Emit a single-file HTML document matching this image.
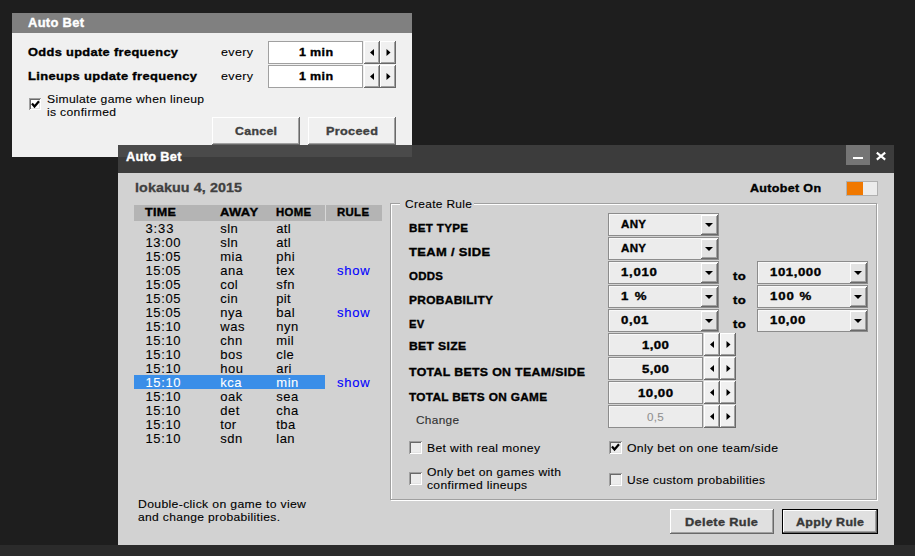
<!DOCTYPE html>
<html><head><meta charset="utf-8"><style>
html,body{margin:0;padding:0;width:915px;height:556px;overflow:hidden;background:#1e1e1e;}
body{position:relative;font-family:"Liberation Sans",sans-serif;}
body>div{position:absolute;}
.t{white-space:nowrap;}
svg{position:absolute}
</style></head><body>
<div style="left:12px;top:13px;width:400px;height:20px;background:#808080"></div>
<div style="left:12px;top:33px;width:400px;height:124px;background:#f0f0f0"></div>
<div class="t" style="left:28.00px;top:12.84px;font-size:12px;font-weight:bold;color:#fff;line-height:20px;letter-spacing:0.300px;-webkit-text-stroke:0.35px #fff;transform:scaleX(1.0740314537782891);transform-origin:0 0;">Auto Bet</div>
<div class="t" style="left:28.00px;top:42.19px;font-size:11px;font-weight:bold;color:#000;line-height:20px;letter-spacing:0.300px;-webkit-text-stroke:0.35px #000;transform:scaleX(1.1639636843330488);transform-origin:0 0;">Odds update frequency</div>
<div class="t" style="left:28.00px;top:66.19px;font-size:11px;font-weight:bold;color:#000;line-height:20px;letter-spacing:0.300px;-webkit-text-stroke:0.35px #000;transform:scaleX(1.1748348974626348);transform-origin:0 0;">Lineups update frequency</div>
<div class="t" style="left:220.70px;top:42.19px;font-size:11px;font-weight:normal;color:#000;line-height:20px;letter-spacing:0.300px;-webkit-text-stroke:0.1px #000;transform:scaleX(1.1367673179396094);transform-origin:0 0;">every</div>
<div class="t" style="left:220.70px;top:66.19px;font-size:11px;font-weight:normal;color:#000;line-height:20px;letter-spacing:0.300px;-webkit-text-stroke:0.1px #000;transform:scaleX(1.1367673179396094);transform-origin:0 0;">every</div>
<div style="left:268px;top:41px;width:95px;height:23px;background:#fff;box-shadow: inset 0 0 0 1px #a0a0a0"></div>
<div style="left:364px;top:41px;width:16px;height:23px;background:#f0f0f0;box-shadow: inset -1px -1px 0 #696969, inset 1px 1px 0 #ffffff, inset -2px -2px 0 #a0a0a0;"></div>
<div style="left:380px;top:41px;width:16px;height:23px;background:#f0f0f0;box-shadow: inset -1px -1px 0 #696969, inset 1px 1px 0 #ffffff, inset -2px -2px 0 #a0a0a0;"></div>
<svg style="left:369px;top:48px" width="6" height="9"><polygon points="1,4.5 5,1 5,8" fill="#000"/></svg>
<svg style="left:386px;top:48px" width="6" height="9"><polygon points="0.5,1 4.5,4.5 0.5,8" fill="#000"/></svg>
<div style="left:268px;top:65px;width:95px;height:23px;background:#fff;box-shadow: inset 0 0 0 1px #a0a0a0"></div>
<div style="left:364px;top:65px;width:16px;height:23px;background:#f0f0f0;box-shadow: inset -1px -1px 0 #696969, inset 1px 1px 0 #ffffff, inset -2px -2px 0 #a0a0a0;"></div>
<div style="left:380px;top:65px;width:16px;height:23px;background:#f0f0f0;box-shadow: inset -1px -1px 0 #696969, inset 1px 1px 0 #ffffff, inset -2px -2px 0 #a0a0a0;"></div>
<svg style="left:369px;top:72px" width="6" height="9"><polygon points="1,4.5 5,1 5,8" fill="#000"/></svg>
<svg style="left:386px;top:72px" width="6" height="9"><polygon points="0.5,1 4.5,4.5 0.5,8" fill="#000"/></svg>
<div class="t" style="left:298.99px;top:42.19px;font-size:11px;font-weight:bold;color:#000;line-height:20px;letter-spacing:0.300px;-webkit-text-stroke:0.35px #000;transform:scaleX(1.1367435640254095);transform-origin:0 0;">1 min</div>
<div class="t" style="left:298.99px;top:66.19px;font-size:11px;font-weight:bold;color:#000;line-height:20px;letter-spacing:0.300px;-webkit-text-stroke:0.35px #000;transform:scaleX(1.1367435640254095);transform-origin:0 0;">1 min</div>
<div style="left:29px;top:98px;width:12px;height:12px;background:#fff;box-shadow: inset 1px 1px 0 #a0a0a0, inset -1px -1px 0 #fff, inset 2px 2px 0 #696969, inset -2px -2px 0 #e3e3e3;"></div>
<svg style="position:absolute;left:29px;top:98px" width="13" height="13"><path d="M3 5.5 L5.5 8.5 L10 3.2" stroke="#000" stroke-width="2.2" fill="none"/></svg>
<div class="t" style="left:46.60px;top:89.19px;font-size:11px;font-weight:normal;color:#000;line-height:20px;letter-spacing:0.300px;-webkit-text-stroke:0.1px #000;transform:scaleX(1.1034579701996063);transform-origin:0 0;">Simulate game when lineup</div>
<div class="t" style="left:46.60px;top:102.19px;font-size:11px;font-weight:normal;color:#000;line-height:20px;letter-spacing:0.300px;-webkit-text-stroke:0.1px #000;transform:scaleX(1.1024125259626139);transform-origin:0 0;">is confirmed</div>
<div style="left:212px;top:117px;width:88px;height:28px;background:#f0f0f0;box-shadow: inset -1px -1px 0 #696969, inset 1px 1px 0 #ffffff, inset -2px -2px 0 #a0a0a0;"></div>
<div style="left:308px;top:117px;width:88px;height:28px;background:#f0f0f0;box-shadow: inset -1px -1px 0 #696969, inset 1px 1px 0 #ffffff, inset -2px -2px 0 #a0a0a0;"></div>
<div class="t" style="left:235.01px;top:121.19px;font-size:11px;font-weight:bold;color:#404040;line-height:20px;letter-spacing:0.300px;-webkit-text-stroke:0.35px #404040;transform:scaleX(1.1176157530601385);transform-origin:0 0;">Cancel</div>
<div class="t" style="left:326.02px;top:121.19px;font-size:11px;font-weight:bold;color:#404040;line-height:20px;letter-spacing:0.300px;-webkit-text-stroke:0.35px #404040;transform:scaleX(1.149171270718232);transform-origin:0 0;">Proceed</div>
<div style="left:118px;top:145px;width:776px;height:28px;background:rgba(63,63,63,0.94)"></div>
<div style="left:118px;top:173px;width:776px;height:372px;background:#d2d2d2"></div>
<div class="t" style="left:126.40px;top:146.84px;font-size:12px;font-weight:bold;color:#fff;line-height:20px;letter-spacing:0.300px;-webkit-text-stroke:0.35px #fff;transform:scaleX(1.0644418872266974);transform-origin:0 0;">Auto Bet</div>
<div style="left:846px;top:145px;width:24px;height:20px;background:#757575"></div>
<div style="left:853px;top:157px;width:10px;height:2px;background:#fff"></div>
<svg style="left:875px;top:151px" width="12" height="10"><path d="M1.8 1.6 L10.2 8.6 M10.2 1.6 L1.8 8.6" stroke="#fff" stroke-width="2.1" stroke-linecap="butt"/></svg>
<div class="t" style="left:135.00px;top:177.50px;font-size:13px;font-weight:bold;color:#404040;line-height:20px;letter-spacing:0.086px;-webkit-text-stroke:0.3px #404040;transform:scaleX(1.1);transform-origin:0 0;">lokakuu 4, 2015</div>
<div style="left:134px;top:205px;width:248px;height:16px;background:#b4b4b4"></div>
<div style="left:325px;top:205px;width:1px;height:16px;background:#d8d8d8"></div>
<div class="t" style="left:145.00px;top:202.19px;font-size:11px;font-weight:bold;color:#000;line-height:20px;letter-spacing:0.300px;-webkit-text-stroke:0.35px #000;transform:scaleX(1.1401250459727843);transform-origin:0 0;">TIME</div>
<div class="t" style="left:220.00px;top:202.19px;font-size:11px;font-weight:bold;color:#000;line-height:20px;letter-spacing:0.300px;-webkit-text-stroke:0.35px #000;transform:scaleX(1.178294573643411);transform-origin:0 0;">AWAY</div>
<div class="t" style="left:276.40px;top:202.19px;font-size:11px;font-weight:bold;color:#000;line-height:20px;letter-spacing:0.300px;-webkit-text-stroke:0.35px #000;transform:scaleX(1.032448377581121);transform-origin:0 0;">HOME</div>
<div class="t" style="left:337.00px;top:202.19px;font-size:11px;font-weight:bold;color:#000;line-height:20px;letter-spacing:0.300px;-webkit-text-stroke:0.35px #000;transform:scaleX(1.0382868267358858);transform-origin:0 0;">RULE</div>
<div class="t" style="left:145.50px;top:218.50px;font-size:13px;font-weight:normal;color:#000;line-height:20px;letter-spacing:0.883px;-webkit-text-stroke:0.1px #000;transform:scaleX(1.0);transform-origin:0 0;">3:33</div>
<div class="t" style="left:220.30px;top:218.50px;font-size:13px;font-weight:normal;color:#000;line-height:20px;letter-spacing:0.404px;-webkit-text-stroke:0.1px #000;transform:scaleX(1.0);transform-origin:0 0;">sln</div>
<div class="t" style="left:276.30px;top:218.50px;font-size:13px;font-weight:normal;color:#000;line-height:20px;letter-spacing:0.318px;-webkit-text-stroke:0.1px #000;transform:scaleX(1.0);transform-origin:0 0;">atl</div>
<div class="t" style="left:145.50px;top:232.50px;font-size:13px;font-weight:normal;color:#000;line-height:20px;letter-spacing:0.625px;-webkit-text-stroke:0.1px #000;transform:scaleX(1.0);transform-origin:0 0;">13:00</div>
<div class="t" style="left:220.30px;top:232.50px;font-size:13px;font-weight:normal;color:#000;line-height:20px;letter-spacing:0.404px;-webkit-text-stroke:0.1px #000;transform:scaleX(1.0);transform-origin:0 0;">sln</div>
<div class="t" style="left:276.30px;top:232.50px;font-size:13px;font-weight:normal;color:#000;line-height:20px;letter-spacing:0.318px;-webkit-text-stroke:0.1px #000;transform:scaleX(1.0);transform-origin:0 0;">atl</div>
<div class="t" style="left:145.50px;top:246.50px;font-size:13px;font-weight:normal;color:#000;line-height:20px;letter-spacing:0.625px;-webkit-text-stroke:0.1px #000;transform:scaleX(1.0);transform-origin:0 0;">15:05</div>
<div class="t" style="left:220.30px;top:246.50px;font-size:13px;font-weight:normal;color:#000;line-height:20px;letter-spacing:0.467px;-webkit-text-stroke:0.1px #000;transform:scaleX(1.0);transform-origin:0 0;">mia</div>
<div class="t" style="left:276.30px;top:246.50px;font-size:13px;font-weight:normal;color:#000;line-height:20px;letter-spacing:0.462px;-webkit-text-stroke:0.1px #000;transform:scaleX(1.0);transform-origin:0 0;">phi</div>
<div class="t" style="left:145.50px;top:260.50px;font-size:13px;font-weight:normal;color:#000;line-height:20px;letter-spacing:0.625px;-webkit-text-stroke:0.1px #000;transform:scaleX(1.0);transform-origin:0 0;">15:05</div>
<div class="t" style="left:220.30px;top:260.50px;font-size:13px;font-weight:normal;color:#000;line-height:20px;letter-spacing:0.531px;-webkit-text-stroke:0.1px #000;transform:scaleX(1.0);transform-origin:0 0;">ana</div>
<div class="t" style="left:276.30px;top:260.50px;font-size:13px;font-weight:normal;color:#000;line-height:20px;letter-spacing:0.459px;-webkit-text-stroke:0.1px #000;transform:scaleX(1.0);transform-origin:0 0;">tex</div>
<div class="t" style="left:337.00px;top:260.50px;font-size:13px;font-weight:normal;color:#0000ff;line-height:20px;letter-spacing:0.727px;-webkit-text-stroke:0.1px #0000ff;transform:scaleX(1.0);transform-origin:0 0;">show</div>
<div class="t" style="left:145.50px;top:274.50px;font-size:13px;font-weight:normal;color:#000;line-height:20px;letter-spacing:0.625px;-webkit-text-stroke:0.1px #000;transform:scaleX(1.0);transform-origin:0 0;">15:05</div>
<div class="t" style="left:220.30px;top:274.50px;font-size:13px;font-weight:normal;color:#000;line-height:20px;letter-spacing:0.404px;-webkit-text-stroke:0.1px #000;transform:scaleX(1.0);transform-origin:0 0;">col</div>
<div class="t" style="left:276.30px;top:274.50px;font-size:13px;font-weight:normal;color:#000;line-height:20px;letter-spacing:0.459px;-webkit-text-stroke:0.1px #000;transform:scaleX(1.0);transform-origin:0 0;">sfn</div>
<div class="t" style="left:145.50px;top:288.50px;font-size:13px;font-weight:normal;color:#000;line-height:20px;letter-spacing:0.625px;-webkit-text-stroke:0.1px #000;transform:scaleX(1.0);transform-origin:0 0;">15:05</div>
<div class="t" style="left:220.30px;top:288.50px;font-size:13px;font-weight:normal;color:#000;line-height:20px;letter-spacing:0.404px;-webkit-text-stroke:0.1px #000;transform:scaleX(1.0);transform-origin:0 0;">cin</div>
<div class="t" style="left:276.30px;top:288.50px;font-size:13px;font-weight:normal;color:#000;line-height:20px;letter-spacing:0.318px;-webkit-text-stroke:0.1px #000;transform:scaleX(1.0);transform-origin:0 0;">pit</div>
<div class="t" style="left:145.50px;top:302.50px;font-size:13px;font-weight:normal;color:#000;line-height:20px;letter-spacing:0.625px;-webkit-text-stroke:0.1px #000;transform:scaleX(1.0);transform-origin:0 0;">15:05</div>
<div class="t" style="left:220.30px;top:302.50px;font-size:13px;font-weight:normal;color:#000;line-height:20px;letter-spacing:0.473px;-webkit-text-stroke:0.1px #000;transform:scaleX(1.0);transform-origin:0 0;">nya</div>
<div class="t" style="left:276.30px;top:302.50px;font-size:13px;font-weight:normal;color:#000;line-height:20px;letter-spacing:0.462px;-webkit-text-stroke:0.1px #000;transform:scaleX(1.0);transform-origin:0 0;">bal</div>
<div class="t" style="left:337.00px;top:302.50px;font-size:13px;font-weight:normal;color:#0000ff;line-height:20px;letter-spacing:0.727px;-webkit-text-stroke:0.1px #0000ff;transform:scaleX(1.0);transform-origin:0 0;">show</div>
<div class="t" style="left:145.50px;top:316.50px;font-size:13px;font-weight:normal;color:#000;line-height:20px;letter-spacing:0.625px;-webkit-text-stroke:0.1px #000;transform:scaleX(1.0);transform-origin:0 0;">15:10</div>
<div class="t" style="left:220.30px;top:316.50px;font-size:13px;font-weight:normal;color:#000;line-height:20px;letter-spacing:0.502px;-webkit-text-stroke:0.1px #000;transform:scaleX(1.0);transform-origin:0 0;">was</div>
<div class="t" style="left:276.30px;top:316.50px;font-size:13px;font-weight:normal;color:#000;line-height:20px;letter-spacing:0.538px;-webkit-text-stroke:0.1px #000;transform:scaleX(1.0);transform-origin:0 0;">nyn</div>
<div class="t" style="left:145.50px;top:330.50px;font-size:13px;font-weight:normal;color:#000;line-height:20px;letter-spacing:0.625px;-webkit-text-stroke:0.1px #000;transform:scaleX(1.0);transform-origin:0 0;">15:10</div>
<div class="t" style="left:220.30px;top:330.50px;font-size:13px;font-weight:normal;color:#000;line-height:20px;letter-spacing:0.538px;-webkit-text-stroke:0.1px #000;transform:scaleX(1.0);transform-origin:0 0;">chn</div>
<div class="t" style="left:276.30px;top:330.50px;font-size:13px;font-weight:normal;color:#000;line-height:20px;letter-spacing:0.398px;-webkit-text-stroke:0.1px #000;transform:scaleX(1.0);transform-origin:0 0;">mil</div>
<div class="t" style="left:145.50px;top:344.50px;font-size:13px;font-weight:normal;color:#000;line-height:20px;letter-spacing:0.625px;-webkit-text-stroke:0.1px #000;transform:scaleX(1.0);transform-origin:0 0;">15:10</div>
<div class="t" style="left:220.30px;top:344.50px;font-size:13px;font-weight:normal;color:#000;line-height:20px;letter-spacing:0.538px;-webkit-text-stroke:0.1px #000;transform:scaleX(1.0);transform-origin:0 0;">bos</div>
<div class="t" style="left:276.30px;top:344.50px;font-size:13px;font-weight:normal;color:#000;line-height:20px;letter-spacing:0.404px;-webkit-text-stroke:0.1px #000;transform:scaleX(1.0);transform-origin:0 0;">cle</div>
<div class="t" style="left:145.50px;top:358.50px;font-size:13px;font-weight:normal;color:#000;line-height:20px;letter-spacing:0.625px;-webkit-text-stroke:0.1px #000;transform:scaleX(1.0);transform-origin:0 0;">15:10</div>
<div class="t" style="left:220.30px;top:358.50px;font-size:13px;font-weight:normal;color:#000;line-height:20px;letter-spacing:0.531px;-webkit-text-stroke:0.1px #000;transform:scaleX(1.0);transform-origin:0 0;">hou</div>
<div class="t" style="left:276.30px;top:358.50px;font-size:13px;font-weight:normal;color:#000;line-height:20px;letter-spacing:0.369px;-webkit-text-stroke:0.1px #000;transform:scaleX(1.0);transform-origin:0 0;">ari</div>
<div style="left:134px;top:375px;width:191px;height:14px;background:#3a8ee8"></div>
<div class="t" style="left:145.50px;top:372.50px;font-size:13px;font-weight:normal;color:#fff;line-height:20px;letter-spacing:0.625px;-webkit-text-stroke:0.1px #fff;transform:scaleX(1.0);transform-origin:0 0;">15:10</div>
<div class="t" style="left:220.30px;top:372.50px;font-size:13px;font-weight:normal;color:#fff;line-height:20px;letter-spacing:0.480px;-webkit-text-stroke:0.1px #fff;transform:scaleX(1.0);transform-origin:0 0;">kca</div>
<div class="t" style="left:276.30px;top:372.50px;font-size:13px;font-weight:normal;color:#fff;line-height:20px;letter-spacing:0.532px;-webkit-text-stroke:0.1px #fff;transform:scaleX(1.0);transform-origin:0 0;">min</div>
<div class="t" style="left:337.00px;top:372.50px;font-size:13px;font-weight:normal;color:#0000ff;line-height:20px;letter-spacing:0.727px;-webkit-text-stroke:0.1px #0000ff;transform:scaleX(1.0);transform-origin:0 0;">show</div>
<div class="t" style="left:145.50px;top:386.50px;font-size:13px;font-weight:normal;color:#000;line-height:20px;letter-spacing:0.625px;-webkit-text-stroke:0.1px #000;transform:scaleX(1.0);transform-origin:0 0;">15:10</div>
<div class="t" style="left:220.30px;top:386.50px;font-size:13px;font-weight:normal;color:#000;line-height:20px;letter-spacing:0.473px;-webkit-text-stroke:0.1px #000;transform:scaleX(1.0);transform-origin:0 0;">oak</div>
<div class="t" style="left:276.30px;top:386.50px;font-size:13px;font-weight:normal;color:#000;line-height:20px;letter-spacing:0.473px;-webkit-text-stroke:0.1px #000;transform:scaleX(1.0);transform-origin:0 0;">sea</div>
<div class="t" style="left:145.50px;top:400.50px;font-size:13px;font-weight:normal;color:#000;line-height:20px;letter-spacing:0.625px;-webkit-text-stroke:0.1px #000;transform:scaleX(1.0);transform-origin:0 0;">15:10</div>
<div class="t" style="left:220.30px;top:400.50px;font-size:13px;font-weight:normal;color:#000;line-height:20px;letter-spacing:0.452px;-webkit-text-stroke:0.1px #000;transform:scaleX(1.0);transform-origin:0 0;">det</div>
<div class="t" style="left:276.30px;top:400.50px;font-size:13px;font-weight:normal;color:#000;line-height:20px;letter-spacing:0.473px;-webkit-text-stroke:0.1px #000;transform:scaleX(1.0);transform-origin:0 0;">cha</div>
<div class="t" style="left:145.50px;top:414.50px;font-size:13px;font-weight:normal;color:#000;line-height:20px;letter-spacing:0.625px;-webkit-text-stroke:0.1px #000;transform:scaleX(1.0);transform-origin:0 0;">15:10</div>
<div class="t" style="left:220.30px;top:414.50px;font-size:13px;font-weight:normal;color:#000;line-height:20px;letter-spacing:0.359px;-webkit-text-stroke:0.1px #000;transform:scaleX(1.0);transform-origin:0 0;">tor</div>
<div class="t" style="left:276.30px;top:414.50px;font-size:13px;font-weight:normal;color:#000;line-height:20px;letter-spacing:0.452px;-webkit-text-stroke:0.1px #000;transform:scaleX(1.0);transform-origin:0 0;">tba</div>
<div class="t" style="left:145.50px;top:428.50px;font-size:13px;font-weight:normal;color:#000;line-height:20px;letter-spacing:0.625px;-webkit-text-stroke:0.1px #000;transform:scaleX(1.0);transform-origin:0 0;">15:10</div>
<div class="t" style="left:220.30px;top:428.50px;font-size:13px;font-weight:normal;color:#000;line-height:20px;letter-spacing:0.538px;-webkit-text-stroke:0.1px #000;transform:scaleX(1.0);transform-origin:0 0;">sdn</div>
<div class="t" style="left:276.30px;top:428.50px;font-size:13px;font-weight:normal;color:#000;line-height:20px;letter-spacing:0.462px;-webkit-text-stroke:0.1px #000;transform:scaleX(1.0);transform-origin:0 0;">lan</div>
<div class="t" style="left:138.30px;top:494.19px;font-size:11px;font-weight:normal;color:#000;line-height:20px;letter-spacing:0.300px;-webkit-text-stroke:0.1px #000;transform:scaleX(1.1110376297863898);transform-origin:0 0;">Double-click on game to view</div>
<div class="t" style="left:138.30px;top:506.79px;font-size:11px;font-weight:normal;color:#000;line-height:20px;letter-spacing:0.300px;-webkit-text-stroke:0.1px #000;transform:scaleX(1.096355775169858);transform-origin:0 0;">and change probabilities.</div>
<div class="t" style="left:750.20px;top:178.19px;font-size:11px;font-weight:bold;color:#000;line-height:20px;letter-spacing:0.300px;-webkit-text-stroke:0.35px #000;transform:scaleX(1.1352734250079948);transform-origin:0 0;">Autobet On</div>
<div style="left:846px;top:181px;width:32px;height:15px;background:#ececec;box-shadow: inset 0 0 0 1px #b0b0b0"></div>
<div style="left:847px;top:182px;width:16px;height:13px;background:#f07800"></div>
<div style="left:391px;top:204px;width:487px;height:297px;box-sizing:border-box;border:1px solid #fff"></div>
<div style="left:390px;top:203px;width:487px;height:297px;box-sizing:border-box;border:1px solid #a0a0a0"></div>
<div style="left:400px;top:198px;width:74px;height:12px;background:#d2d2d2"></div>
<div class="t" style="left:404.70px;top:194.19px;font-size:11px;font-weight:normal;color:#000;line-height:20px;letter-spacing:0.300px;-webkit-text-stroke:0.1px #000;transform:scaleX(1.0851959831551667);transform-origin:0 0;">Create Rule</div>
<div class="t" style="left:408.70px;top:218.19px;font-size:11px;font-weight:bold;color:#000;line-height:20px;letter-spacing:0.300px;-webkit-text-stroke:0.35px #000;transform:scaleX(1.055645016997674);transform-origin:0 0;">BET TYPE</div>
<div class="t" style="left:408.70px;top:242.19px;font-size:11px;font-weight:bold;color:#000;line-height:20px;letter-spacing:0.300px;-webkit-text-stroke:0.35px #000;transform:scaleX(1.173913043478261);transform-origin:0 0;">TEAM / SIDE</div>
<div class="t" style="left:408.70px;top:266.19px;font-size:11px;font-weight:bold;color:#000;line-height:20px;letter-spacing:0.300px;-webkit-text-stroke:0.35px #000;transform:scaleX(1.0400734169470787);transform-origin:0 0;">ODDS</div>
<div class="t" style="left:408.70px;top:290.19px;font-size:11px;font-weight:bold;color:#000;line-height:20px;letter-spacing:0.300px;-webkit-text-stroke:0.35px #000;transform:scaleX(1.082753286929621);transform-origin:0 0;">PROBABILITY</div>
<div class="t" style="left:408.70px;top:314.19px;font-size:11px;font-weight:bold;color:#000;line-height:20px;letter-spacing:0.300px;-webkit-text-stroke:0.35px #000;transform:scaleX(1.0172872340425532);transform-origin:0 0;">EV</div>
<div style="left:608px;top:213px;width:111px;height:23px;background:#ececec;box-shadow: inset 0 0 0 1px #8c8c8c, inset 2px 2px 0 #f8f8f8"></div>
<div style="left:701px;top:215px;width:17px;height:20px;background:#e3e3e3;box-shadow: inset -1px -1px 0 #696969, inset 1px 1px 0 #ffffff, inset -2px -2px 0 #a0a0a0;"></div>
<div style="left:705px;top:223px;width:0;height:0;border-left:4px solid transparent;border-right:4px solid transparent;border-top:4px solid #000"></div>
<div class="t" style="left:620.60px;top:214.19px;font-size:11px;font-weight:bold;color:#000;line-height:20px;letter-spacing:0.300px;-webkit-text-stroke:0.35px #000;transform:scaleX(1.0499790004199916);transform-origin:0 0;">ANY</div>
<div style="left:608px;top:237px;width:111px;height:23px;background:#ececec;box-shadow: inset 0 0 0 1px #8c8c8c, inset 2px 2px 0 #f8f8f8"></div>
<div style="left:701px;top:239px;width:17px;height:20px;background:#e3e3e3;box-shadow: inset -1px -1px 0 #696969, inset 1px 1px 0 #ffffff, inset -2px -2px 0 #a0a0a0;"></div>
<div style="left:705px;top:247px;width:0;height:0;border-left:4px solid transparent;border-right:4px solid transparent;border-top:4px solid #000"></div>
<div class="t" style="left:620.60px;top:238.19px;font-size:11px;font-weight:bold;color:#000;line-height:20px;letter-spacing:0.300px;-webkit-text-stroke:0.35px #000;transform:scaleX(1.0499790004199916);transform-origin:0 0;">ANY</div>
<div style="left:608px;top:261px;width:111px;height:23px;background:#ececec;box-shadow: inset 0 0 0 1px #8c8c8c, inset 2px 2px 0 #f8f8f8"></div>
<div style="left:701px;top:263px;width:17px;height:20px;background:#e3e3e3;box-shadow: inset -1px -1px 0 #696969, inset 1px 1px 0 #ffffff, inset -2px -2px 0 #a0a0a0;"></div>
<div style="left:705px;top:271px;width:0;height:0;border-left:4px solid transparent;border-right:4px solid transparent;border-top:4px solid #000"></div>
<div class="t" style="left:620.60px;top:262.19px;font-size:11px;font-weight:bold;color:#000;line-height:20px;letter-spacing:0.583px;-webkit-text-stroke:0.35px #000;transform:scaleX(1.2);transform-origin:0 0;">1,010</div>
<div style="left:608px;top:285px;width:111px;height:23px;background:#ececec;box-shadow: inset 0 0 0 1px #8c8c8c, inset 2px 2px 0 #f8f8f8"></div>
<div style="left:701px;top:287px;width:17px;height:20px;background:#e3e3e3;box-shadow: inset -1px -1px 0 #696969, inset 1px 1px 0 #ffffff, inset -2px -2px 0 #a0a0a0;"></div>
<div style="left:705px;top:295px;width:0;height:0;border-left:4px solid transparent;border-right:4px solid transparent;border-top:4px solid #000"></div>
<div class="t" style="left:620.60px;top:286.19px;font-size:11px;font-weight:bold;color:#000;line-height:20px;letter-spacing:1.123px;-webkit-text-stroke:0.35px #000;transform:scaleX(1.2);transform-origin:0 0;">1 %</div>
<div style="left:608px;top:309px;width:111px;height:23px;background:#ececec;box-shadow: inset 0 0 0 1px #8c8c8c, inset 2px 2px 0 #f8f8f8"></div>
<div style="left:701px;top:311px;width:17px;height:20px;background:#e3e3e3;box-shadow: inset -1px -1px 0 #696969, inset 1px 1px 0 #ffffff, inset -2px -2px 0 #a0a0a0;"></div>
<div style="left:705px;top:319px;width:0;height:0;border-left:4px solid transparent;border-right:4px solid transparent;border-top:4px solid #000"></div>
<div class="t" style="left:620.60px;top:310.19px;font-size:11px;font-weight:bold;color:#000;line-height:20px;letter-spacing:0.489px;-webkit-text-stroke:0.35px #000;transform:scaleX(1.2);transform-origin:0 0;">0,01</div>
<div style="left:757px;top:261px;width:111px;height:23px;background:#ececec;box-shadow: inset 0 0 0 1px #8c8c8c, inset 2px 2px 0 #f8f8f8"></div>
<div style="left:850px;top:263px;width:17px;height:20px;background:#e3e3e3;box-shadow: inset -1px -1px 0 #696969, inset 1px 1px 0 #ffffff, inset -2px -2px 0 #a0a0a0;"></div>
<div style="left:854px;top:271px;width:0;height:0;border-left:4px solid transparent;border-right:4px solid transparent;border-top:4px solid #000"></div>
<div class="t" style="left:769.60px;top:262.19px;font-size:11px;font-weight:bold;color:#000;line-height:20px;letter-spacing:0.465px;-webkit-text-stroke:0.35px #000;transform:scaleX(1.2);transform-origin:0 0;">101,000</div>
<div style="left:757px;top:285px;width:111px;height:23px;background:#ececec;box-shadow: inset 0 0 0 1px #8c8c8c, inset 2px 2px 0 #f8f8f8"></div>
<div style="left:850px;top:287px;width:17px;height:20px;background:#e3e3e3;box-shadow: inset -1px -1px 0 #696969, inset 1px 1px 0 #ffffff, inset -2px -2px 0 #a0a0a0;"></div>
<div style="left:854px;top:295px;width:0;height:0;border-left:4px solid transparent;border-right:4px solid transparent;border-top:4px solid #000"></div>
<div class="t" style="left:769.60px;top:286.19px;font-size:11px;font-weight:bold;color:#000;line-height:20px;letter-spacing:0.794px;-webkit-text-stroke:0.35px #000;transform:scaleX(1.2);transform-origin:0 0;">100 %</div>
<div style="left:757px;top:309px;width:111px;height:23px;background:#ececec;box-shadow: inset 0 0 0 1px #8c8c8c, inset 2px 2px 0 #f8f8f8"></div>
<div style="left:850px;top:311px;width:17px;height:20px;background:#e3e3e3;box-shadow: inset -1px -1px 0 #696969, inset 1px 1px 0 #ffffff, inset -2px -2px 0 #a0a0a0;"></div>
<div style="left:854px;top:319px;width:0;height:0;border-left:4px solid transparent;border-right:4px solid transparent;border-top:4px solid #000"></div>
<div class="t" style="left:769.60px;top:310.19px;font-size:11px;font-weight:bold;color:#000;line-height:20px;letter-spacing:0.458px;-webkit-text-stroke:0.35px #000;transform:scaleX(1.2);transform-origin:0 0;">10,00</div>
<div class="t" style="left:733.00px;top:265.79px;font-size:11px;font-weight:bold;color:#000;line-height:20px;letter-spacing:0.300px;-webkit-text-stroke:0.35px #000;transform:scaleX(1.1842105263157894);transform-origin:0 0;">to</div>
<div class="t" style="left:733.00px;top:289.79px;font-size:11px;font-weight:bold;color:#000;line-height:20px;letter-spacing:0.300px;-webkit-text-stroke:0.35px #000;transform:scaleX(1.1842105263157894);transform-origin:0 0;">to</div>
<div class="t" style="left:733.00px;top:313.79px;font-size:11px;font-weight:bold;color:#000;line-height:20px;letter-spacing:0.300px;-webkit-text-stroke:0.35px #000;transform:scaleX(1.1842105263157894);transform-origin:0 0;">to</div>
<div class="t" style="left:408.70px;top:336.19px;font-size:11px;font-weight:bold;color:#000;line-height:20px;letter-spacing:0.300px;-webkit-text-stroke:0.35px #000;transform:scaleX(1.1046511627906976);transform-origin:0 0;">BET SIZE</div>
<div class="t" style="left:408.70px;top:362.49px;font-size:11px;font-weight:bold;color:#000;line-height:20px;letter-spacing:0.300px;-webkit-text-stroke:0.35px #000;transform:scaleX(1.1212333566923616);transform-origin:0 0;">TOTAL BETS ON TEAM/SIDE</div>
<div class="t" style="left:408.70px;top:386.59px;font-size:11px;font-weight:bold;color:#000;line-height:20px;letter-spacing:0.300px;-webkit-text-stroke:0.35px #000;transform:scaleX(1.0737628384687208);transform-origin:0 0;">TOTAL BETS ON GAME</div>
<div class="t" style="left:416.40px;top:410.19px;font-size:11px;font-weight:normal;color:#303030;line-height:20px;letter-spacing:0.300px;-webkit-text-stroke:0.1px #303030;transform:scaleX(1.075);transform-origin:0 0;">Change</div>
<div style="left:608px;top:333px;width:95px;height:23px;background:#ececec;box-shadow: inset 0 0 0 1px #8c8c8c, inset 2px 2px 0 #f8f8f8"></div>
<div style="left:704px;top:333px;width:16px;height:23px;background:#f0f0f0;box-shadow: inset -1px -1px 0 #696969, inset 1px 1px 0 #ffffff, inset -2px -2px 0 #a0a0a0;"></div>
<div style="left:720px;top:333px;width:16px;height:23px;background:#f0f0f0;box-shadow: inset -1px -1px 0 #696969, inset 1px 1px 0 #ffffff, inset -2px -2px 0 #a0a0a0;"></div>
<svg style="left:709px;top:340px" width="6" height="9"><polygon points="1,4.5 5,1 5,8" fill="#000"/></svg>
<svg style="left:726px;top:340px" width="6" height="9"><polygon points="0.5,1 4.5,4.5 0.5,8" fill="#000"/></svg>
<div class="t" style="left:642.03px;top:335.19px;font-size:11px;font-weight:bold;color:#000;line-height:20px;letter-spacing:0.350px;-webkit-text-stroke:0.35px #000;transform:scaleX(1.2);transform-origin:0 0;">1,00</div>
<div style="left:608px;top:357px;width:95px;height:23px;background:#ececec;box-shadow: inset 0 0 0 1px #8c8c8c, inset 2px 2px 0 #f8f8f8"></div>
<div style="left:704px;top:357px;width:16px;height:23px;background:#f0f0f0;box-shadow: inset -1px -1px 0 #696969, inset 1px 1px 0 #ffffff, inset -2px -2px 0 #a0a0a0;"></div>
<div style="left:720px;top:357px;width:16px;height:23px;background:#f0f0f0;box-shadow: inset -1px -1px 0 #696969, inset 1px 1px 0 #ffffff, inset -2px -2px 0 #a0a0a0;"></div>
<svg style="left:709px;top:364px" width="6" height="9"><polygon points="1,4.5 5,1 5,8" fill="#000"/></svg>
<svg style="left:726px;top:364px" width="6" height="9"><polygon points="0.5,1 4.5,4.5 0.5,8" fill="#000"/></svg>
<div class="t" style="left:642.03px;top:359.19px;font-size:11px;font-weight:bold;color:#000;line-height:20px;letter-spacing:0.350px;-webkit-text-stroke:0.35px #000;transform:scaleX(1.2);transform-origin:0 0;">5,00</div>
<div style="left:608px;top:381px;width:95px;height:23px;background:#ececec;box-shadow: inset 0 0 0 1px #8c8c8c, inset 2px 2px 0 #f8f8f8"></div>
<div style="left:704px;top:381px;width:16px;height:23px;background:#f0f0f0;box-shadow: inset -1px -1px 0 #696969, inset 1px 1px 0 #ffffff, inset -2px -2px 0 #a0a0a0;"></div>
<div style="left:720px;top:381px;width:16px;height:23px;background:#f0f0f0;box-shadow: inset -1px -1px 0 #696969, inset 1px 1px 0 #ffffff, inset -2px -2px 0 #a0a0a0;"></div>
<svg style="left:709px;top:388px" width="6" height="9"><polygon points="1,4.5 5,1 5,8" fill="#000"/></svg>
<svg style="left:726px;top:388px" width="6" height="9"><polygon points="0.5,1 4.5,4.5 0.5,8" fill="#000"/></svg>
<div class="t" style="left:637.99px;top:383.19px;font-size:11px;font-weight:bold;color:#000;line-height:20px;letter-spacing:0.417px;-webkit-text-stroke:0.35px #000;transform:scaleX(1.2);transform-origin:0 0;">10,00</div>
<div style="left:608px;top:405px;width:95px;height:23px;background:#ececec;box-shadow: inset 0 0 0 1px #8c8c8c, inset 2px 2px 0 #f8f8f8"></div>
<div style="left:704px;top:405px;width:16px;height:23px;background:#f0f0f0;box-shadow: inset -1px -1px 0 #696969, inset 1px 1px 0 #ffffff, inset -2px -2px 0 #a0a0a0;"></div>
<div style="left:720px;top:405px;width:16px;height:23px;background:#f0f0f0;box-shadow: inset -1px -1px 0 #696969, inset 1px 1px 0 #ffffff, inset -2px -2px 0 #a0a0a0;"></div>
<svg style="left:709px;top:412px" width="6" height="9"><polygon points="1,4.5 5,1 5,8" fill="#000"/></svg>
<svg style="left:726px;top:412px" width="6" height="9"><polygon points="0.5,1 4.5,4.5 0.5,8" fill="#000"/></svg>
<div class="t" style="left:647.10px;top:407.19px;font-size:11px;font-weight:normal;color:#909090;line-height:20px;letter-spacing:0.300px;-webkit-text-stroke:0.1px #909090;transform:scaleX(1.0572687224669606);transform-origin:0 0;">0,5</div>
<div style="left:409px;top:441px;width:13px;height:13px;background:#ececec;box-shadow: inset 1px 1px 0 #a0a0a0, inset -1px -1px 0 #fff, inset 2px 2px 0 #696969, inset -2px -2px 0 #e3e3e3;"></div>
<div class="t" style="left:426.70px;top:438.19px;font-size:11px;font-weight:normal;color:#000;line-height:20px;letter-spacing:0.300px;-webkit-text-stroke:0.1px #000;transform:scaleX(1.1080604040007844);transform-origin:0 0;">Bet with real money</div>
<div style="left:409px;top:472px;width:13px;height:13px;background:#ececec;box-shadow: inset 1px 1px 0 #a0a0a0, inset -1px -1px 0 #fff, inset 2px 2px 0 #696969, inset -2px -2px 0 #e3e3e3;"></div>
<div class="t" style="left:426.70px;top:462.19px;font-size:11px;font-weight:normal;color:#000;line-height:20px;letter-spacing:0.300px;-webkit-text-stroke:0.1px #000;transform:scaleX(1.1051546391752578);transform-origin:0 0;">Only bet on games with</div>
<div class="t" style="left:426.70px;top:474.79px;font-size:11px;font-weight:normal;color:#000;line-height:20px;letter-spacing:0.300px;-webkit-text-stroke:0.1px #000;transform:scaleX(1.0984182776801408);transform-origin:0 0;">confirmed lineups</div>
<div style="left:609px;top:441px;width:13px;height:13px;background:#ececec;box-shadow: inset 1px 1px 0 #a0a0a0, inset -1px -1px 0 #fff, inset 2px 2px 0 #696969, inset -2px -2px 0 #e3e3e3;"></div>
<svg style="position:absolute;left:609px;top:441px" width="13" height="13"><path d="M3 5.5 L5.5 8.5 L10 3.2" stroke="#000" stroke-width="2.2" fill="none"/></svg>
<div class="t" style="left:626.70px;top:438.19px;font-size:11px;font-weight:normal;color:#000;line-height:20px;letter-spacing:0.300px;-webkit-text-stroke:0.1px #000;transform:scaleX(1.113815740945637);transform-origin:0 0;">Only bet on one team/side</div>
<div style="left:609px;top:473px;width:13px;height:13px;background:#ececec;box-shadow: inset 1px 1px 0 #a0a0a0, inset -1px -1px 0 #fff, inset 2px 2px 0 #696969, inset -2px -2px 0 #e3e3e3;"></div>
<div class="t" style="left:626.70px;top:469.69px;font-size:11px;font-weight:normal;color:#000;line-height:20px;letter-spacing:0.300px;-webkit-text-stroke:0.1px #000;transform:scaleX(1.0892730286526164);transform-origin:0 0;">Use custom probabilities</div>
<div style="left:670px;top:509px;width:104px;height:25px;background:#e0e0e0;box-shadow: inset -1px -1px 0 #696969, inset 1px 1px 0 #ffffff, inset -2px -2px 0 #a0a0a0;"></div>
<div class="t" style="left:684.53px;top:511.59px;font-size:11px;font-weight:bold;color:#383838;line-height:20px;letter-spacing:0.300px;-webkit-text-stroke:0.35px #383838;transform:scaleX(1.159650516282764);transform-origin:0 0;">Delete Rule</div>
<div style="left:782px;top:509px;width:96px;height:25px;box-sizing:border-box;border:1px solid #000;background:#e0e0e0;box-shadow: inset -1px -1px 0 #696969, inset 1px 1px 0 #ffffff, inset -2px -2px 0 #a0a0a0;"></div>
<div class="t" style="left:795.99px;top:511.59px;font-size:11px;font-weight:bold;color:#383838;line-height:20px;letter-spacing:0.300px;-webkit-text-stroke:0.35px #383838;transform:scaleX(1.1310711909514304);transform-origin:0 0;">Apply Rule</div>
<div style="left:0px;top:545px;width:915px;height:11px;background:#2b2b2b"></div>
</body></html>
